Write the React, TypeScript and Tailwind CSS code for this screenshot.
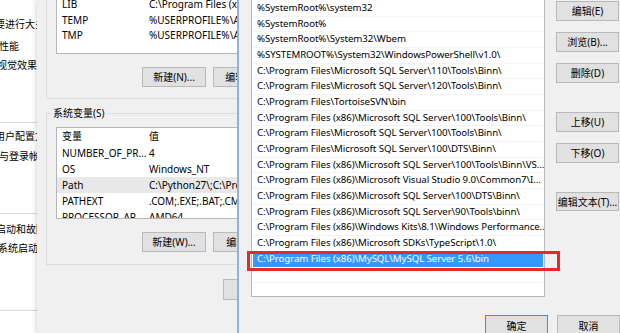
import React from "react";

const font = "font-['Noto_Sans','Noto_Sans_CJK_SC',sans-serif]";

const pathRows = [
  "%SystemRoot%\\system32",
  "%SystemRoot%",
  "%SystemRoot%\\System32\\Wbem",
  "%SYSTEMROOT%\\System32\\WindowsPowerShell\\v1.0\\",
  "C:\\Program Files\\Microsoft SQL Server\\110\\Tools\\Binn\\",
  "C:\\Program Files\\Microsoft SQL Server\\120\\Tools\\Binn\\",
  "C:\\Program Files\\TortoiseSVN\\bin",
  "C:\\Program Files (x86)\\Microsoft SQL Server\\100\\Tools\\Binn\\",
  "C:\\Program Files\\Microsoft SQL Server\\100\\Tools\\Binn\\",
  "C:\\Program Files\\Microsoft SQL Server\\100\\DTS\\Binn\\",
  "C:\\Program Files (x86)\\Microsoft SQL Server\\100\\Tools\\Binn\\VS...",
  "C:\\Program Files (x86)\\Microsoft Visual Studio 9.0\\Common7\\I...",
  "C:\\Program Files (x86)\\Microsoft SQL Server\\100\\DTS\\Binn\\",
  "C:\\Program Files (x86)\\Microsoft SQL Server\\90\\Tools\\binn\\",
  "C:\\Program Files (x86)\\Windows Kits\\8.1\\Windows Performance...",
  "C:\\Program Files (x86)\\Microsoft SDKs\\TypeScript\\1.0\\",
];

const userVars = [
  ["LIB", "C:\\Program Files (x86)\\Windows Kits"],
  ["TEMP", "%USERPROFILE%\\AppData\\Local\\Temp"],
  ["TMP", "%USERPROFILE%\\AppData\\Local\\Temp"],
];

const sysVars = [
  ["NUMBER_OF_PR...", "4"],
  ["OS", "Windows_NT"],
  ["Path", "C:\\Python27\\;C:\\Program Files"],
  ["PATHEXT", ".COM;.EXE;.BAT;.CMD;.VBS"],
  ["PROCESSOR_AR...", "AMD64"],
];

// plain windows-style push button
const Btn = ({
  label,
  className = "",
  primary = false,
}: {
  label: string;
  className?: string;
  primary?: boolean;
}) => (
  <div
    className={`flex items-center justify-center shrink-0 bg-[#e1e1e1] border text-[10px] leading-none text-black whitespace-nowrap ${
      primary ? "border-[#3d8ee0]" : "border-[#b9b9b9]"
    } ${className}`}
  >
    {label}
  </div>
);

const LeftWindow = () => (
  <div className="w-[37px] shrink-0 bg-white overflow-hidden text-[10px] leading-[14px] text-black whitespace-nowrap">
    <div className="pt-[17px] -ml-[5px]">要进行大多数更改，你必须作为管理员登录。</div>
    <div className="mt-[8px] -ml-[1px]">性能</div>
    <div className="mt-[5px] -ml-[3px]">视觉效果，处理器计划，内存使用</div>
    <div className="mt-[50px] h-px bg-[#dcdcdc]" />
    <div className="mt-[6px] -ml-[5px]">用户配置文件</div>
    <div className="mt-[6px] -ml-[1px]">与登录帐户相关的桌面设置</div>
    <div className="mt-[50px] h-px bg-[#dcdcdc]" />
    <div className="mt-[8px] -ml-[4px]">启动和故障恢复</div>
    <div className="mt-[5px] -ml-[2px]">系统启动、系统故障和调试信息</div>
    <div className="mt-[55px] h-px bg-[#dcdcdc]" />
  </div>
);

const MiddleDialog = () => (
  <div className="w-[200px] shrink-0 bg-[#f0f0f0] overflow-hidden shadow-[-2px_0_4px_rgba(0,0,0,0.12)]">
    <div className="w-[320px] text-[10px] text-black">
      {/* user variables group */}
      <div className="ml-[9px] border-l border-b border-[#dcdcdc] pl-[9px] pb-[11px]">
        <div className="h-[54px] bg-white border-l border-b border-[#b5b7bb] overflow-hidden">
          <div className="-mt-[3px]">
            {userVars.map(([k, v]) => (
              <div key={k} className="flex h-[15.5px] items-center whitespace-nowrap">
                <span className="w-[92px] pl-[5px]">{k}</span>
                <span>{v}</span>
              </div>
            ))}
          </div>
        </div>
        <div className="flex gap-[7px] mt-[13px] ml-[86px]">
          <Btn label="新建(N)..." className="w-[64px] h-[20px]" />
          <Btn label="编辑(E)..." className="w-[64px] h-[20px]" />
        </div>
      </div>

      {/* system variables group */}
      <fieldset className="ml-[9px] mt-[7px] border border-[#dcdcdc] pl-[9px] pb-[12px]">
        <legend className="-ml-[5px] px-[2px] text-[10px] leading-[14px]">系统变量(S)</legend>
        <div className="mt-[7px] h-[92px] bg-white border-l border-y border-[#b5b7bb] overflow-hidden">
          <div className="flex h-[17px] items-center whitespace-nowrap">
            <span className="w-[92px] pl-[5px]">变量</span>
            <span>值</span>
          </div>
          {sysVars.map(([k, v]) => (
            <div
              key={k}
              className={`flex h-[16px] items-center whitespace-nowrap ${
                k === "Path" ? "bg-[#e8e8e8]" : ""
              }`}
            >
              <span className="w-[92px] pl-[5px]">{k}</span>
              <span>{v}</span>
            </div>
          ))}
        </div>
        <div className="flex gap-[7px] mt-[13px] ml-[86px]">
          <Btn label="新建(W)..." className="w-[64px] h-[20px]" />
          <Btn label="编辑(I)..." className="w-[64px] h-[20px]" />
        </div>
      </fieldset>

      <div className="mt-[14px] ml-[186px]">
        <Btn label="确定" className="w-[64px] h-[21px]" />
      </div>
    </div>
  </div>
);

const RightDialog = () => (
  <div className="flex-1 bg-[#f0f0f0] border-l-2 border-[#8fb3de] flex flex-col overflow-hidden text-[10px] text-black">
    <div className="flex">
      <div className="ml-[12px] w-[294px] h-[297px] shrink-0 bg-white border-x border-b border-[#b5b7bb] pt-[1px] px-[1px] overflow-hidden text-[9.7px] tracking-[-0.08px]">
        {pathRows.map((r) => (
          <div
            key={r}
            className="h-[15.66px] flex items-center pl-[4px] border-b border-[#f3f3f3] whitespace-nowrap"
          >
            {r}
          </div>
        ))}
        <div className="h-[15.66px] flex items-center pl-[4px] bg-[#3399ff] text-white whitespace-nowrap">
          C:\Program Files (x86)\MySQL\MySQL Server 5.6\bin
        </div>
        <div className="h-[15.66px] border-b border-[#f3f3f3]" />
      </div>
      <div className="ml-[11px] pt-[1px] flex flex-col">
        <Btn label="编辑(E)" className="w-[63px] h-[20px]" />
        <Btn label="浏览(B)..." className="w-[63px] h-[20px] mt-[11px]" />
        <Btn label="删除(D)" className="w-[63px] h-[20px] mt-[11px]" />
        <Btn label="上移(U)" className="w-[63px] h-[20px] mt-[29px]" />
        <Btn label="下移(O)" className="w-[63px] h-[20px] mt-[11px]" />
        <Btn label="编辑文本(T)..." className="w-[63px] h-[19px] mt-[29px]" />
      </div>
    </div>
    <div className="flex justify-end gap-[9px] mt-[18px]">
      <Btn label="确定" primary className="w-[63px] h-[22px]" />
      <Btn label="取消" className="w-[63px] h-[22px]" />
    </div>
  </div>
);

export default function App() {
  return (
    <div className={`relative w-[620px] h-[333px] overflow-hidden flex bg-[#f0f0f0] ${font}`}>
      <LeftWindow />
      <MiddleDialog />
      <RightDialog />
      {/* red highlight drawn over the selected Path entry */}
      <div className="absolute left-[247px] top-[251px] w-[313px] h-[20px] border-[3px] border-[#e8262b] pointer-events-none" />
    </div>
  );
}
